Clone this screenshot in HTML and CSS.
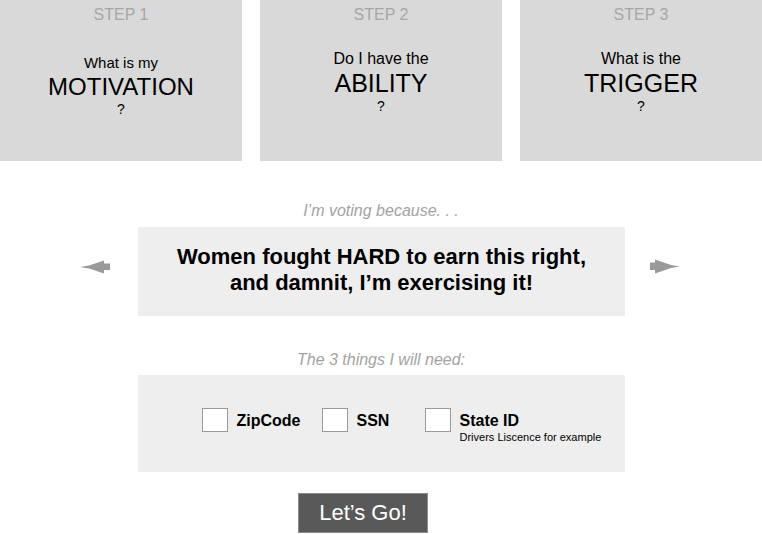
FILE: index.html
```html
<!DOCTYPE html>
<html lang="en">
<head>
<meta charset="utf-8">
<title>Why I vote</title>
<link rel="stylesheet" href="styles.css">
</head>
<body>
<div class="steps">
  <div class="step step--first">
    <div class="step-label">STEP 1</div>
    <div class="step-body">
      <div class="step-q">What is my</div>
      <div class="step-key">MOTIVATION</div>
      <div class="step-mark">?</div>
    </div>
  </div>
  <div class="step">
    <div class="step-label">STEP 2</div>
    <div class="step-body">
      <div class="step-q">Do I have the</div>
      <div class="step-key">ABILITY</div>
      <div class="step-mark">?</div>
    </div>
  </div>
  <div class="step">
    <div class="step-label">STEP 3</div>
    <div class="step-body">
      <div class="step-q">What is the</div>
      <div class="step-key">TRIGGER</div>
      <div class="step-mark">?</div>
    </div>
  </div>
</div>

<div class="caption caption--reason">I’m voting because. . .</div>
<div class="carousel">
  <svg class="arrow arrow--prev" width="30" height="14" viewBox="0 0 30 14" aria-hidden="true">
    <polygon points="0,7 9,5.6 24,0.5 24,3.5 30,3.5 30,10 24,10 24,13.5 9,8.4" fill="#9a9a9a"/>
  </svg>
  <div class="quote">Women fought HARD to earn this right,<br>and damnit, I’m exercising it!</div>
  <svg class="arrow arrow--next" width="30" height="15" viewBox="0 0 30 15" aria-hidden="true">
    <polygon points="30,7.5 21,6 5,0.5 5,3.5 0,3.5 0,11 5,11 5,14.5 21,9" fill="#9a9a9a"/>
  </svg>
</div>

<div class="caption caption--needs">The 3 things I will need:</div>
<div class="checklist">
  <div class="check-item">
    <span class="check-box"></span>
    <div class="check-text"><div class="check-label">ZipCode</div></div>
  </div>
  <div class="check-item">
    <span class="check-box"></span>
    <div class="check-text"><div class="check-label">SSN</div></div>
  </div>
  <div class="check-item">
    <span class="check-box"></span>
    <div class="check-text">
      <div class="check-label">State ID</div>
      <div class="check-note">Drivers Liscence for example</div>
    </div>
  </div>
</div>

<button class="go-button" type="button">Let’s Go!</button>
</body>
</html>
```

FILE: styles.css
```css
html, body {
  margin: 0;
  padding: 0;
  background: #ffffff;
}

body {
  width: 762px;
  font-family: "Liberation Sans", Arial, Helvetica, sans-serif;
  color: #000000;
}

.steps {
  display: flex;
  gap: 18px;
}

.step {
  width: 242px;
  height: 161px;
  background: #d9d9d9;
  text-align: center;
}

.step-label {
  padding-top: 5px;
  font-size: 16px;
  line-height: 19px;
  color: #a6a6a6;
}

.step-body {
  margin-top: 25px;
}

.step-q {
  font-size: 16px;
  line-height: 20px;
}

.step-key {
  font-size: 25px;
  line-height: 29px;
}

.step-mark {
  font-size: 14px;
  line-height: 17px;
}

.step--first .step-body {
  margin-top: 29px;
}

.step--first .step-q {
  font-size: 15px;
}

.step--first .step-key {
  font-size: 24px;
  line-height: 28px;
}

.caption {
  width: 487px;
  margin: 0 auto;
  text-align: center;
  font-style: italic;
  font-size: 16px;
  line-height: 19px;
  color: #a3a3a3;
}

.caption--reason {
  margin-top: 40px;
  margin-bottom: 7px;
}

.caption--needs {
  margin-top: 34px;
  margin-bottom: 6px;
}

.carousel {
  display: flex;
  align-items: flex-start;
  padding-left: 80px;
}

.arrow {
  display: block;
  flex: none;
  margin-top: 33px;
}

.arrow--prev {
  margin-right: 28px;
}

.arrow--next {
  margin-left: 25px;
  margin-top: 32px;
}

.quote {
  width: 487px;
  box-sizing: border-box;
  padding: 17px 0 20px;
  background: #eeeeee;
  text-align: center;
  font-weight: bold;
  font-size: 22px;
  line-height: 26px;
}

.checklist {
  width: 487px;
  height: 97px;
  box-sizing: border-box;
  margin: 0 auto;
  padding: 33px 0 0 64px;
  background: #eeeeee;
  display: grid;
  grid-template-columns: 120px 103px auto;
  align-items: start;
}

.check-item {
  display: flex;
  align-items: flex-start;
  gap: 9px;
}

.check-box {
  display: block;
  width: 26px;
  height: 24px;
  box-sizing: border-box;
  border: 1px solid #9a9a9a;
  background: #ffffff;
  flex: none;
}

.check-text {
  padding-top: 3px;
}

.check-label {
  font-weight: bold;
  font-size: 16px;
  line-height: 19px;
}

.check-note {
  margin-top: 1px;
  font-size: 11px;
  line-height: 13px;
}

.go-button {
  display: block;
  margin: 21px 0 0 298px;
  width: 130px;
  height: 40px;
  box-sizing: border-box;
  padding: 0;
  border: 1px solid #8c8c8c;
  background: #595959;
  color: #ffffff;
  font-family: "Liberation Sans", Arial, Helvetica, sans-serif;
  font-size: 22px;
  line-height: 38px;
  text-align: center;
}
```
